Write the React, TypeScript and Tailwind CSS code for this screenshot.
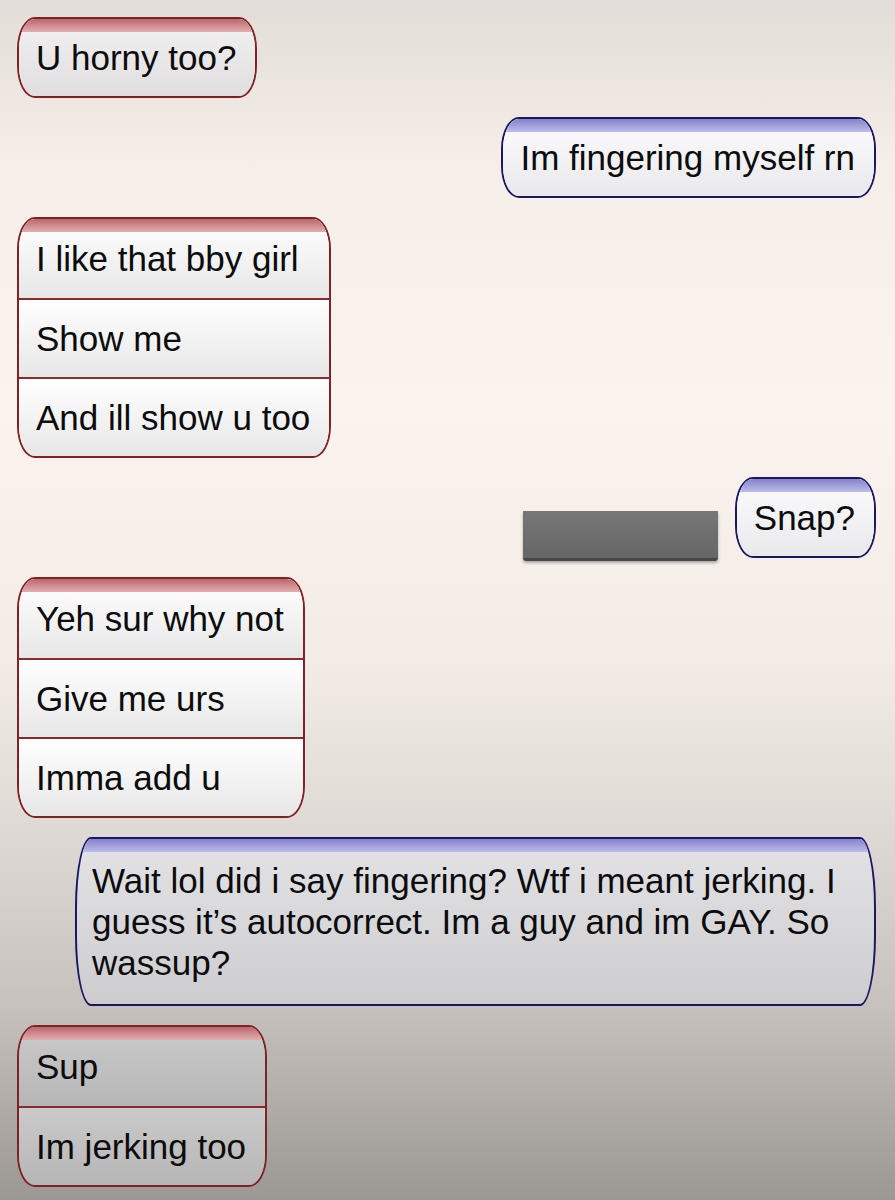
import React from "react";

type Side = "left" | "right";
type Tone = "top" | "light" | "white" | "mid" | "dark";

interface BubbleProps {
  side: Side;
  tone: Tone;
  lines: string[];
}

const toneClass: Record<Tone, string> = {
  top: "bg-linear-to-b from-[#f2f1f1] to-[#e0dede]",
  light: "bg-linear-to-b from-[#fcfcfd] to-[#e9e9ec]",
  white: "bg-linear-to-b from-[#ffffff] to-[#e7e7e7]",
  mid: "bg-linear-to-b from-[#e3e3e6] to-[#cbcbce]",
  dark: "bg-linear-to-b from-[#cacaca] to-[#b6b6b6]",
};

// one bubble, several rows for stacked messages
function Bubble({ side, tone, lines }: BubbleProps) {
  const left = side === "left";
  const single = lines.length === 1;

  return (
    <div
      className={`relative w-fit overflow-hidden border-2 rounded-[18px/32px] ${
        left ? "border-[#7e2226]" : "border-[#1b1763]"
      }`}
    >
      {lines.map((line, i) => (
        <div
          key={i}
          className={`flex items-center pl-[17px] pr-[19px] ${toneClass[tone]} ${
            single ? "h-[77px]" : "h-[79px]"
          } ${i > 0 ? (left ? "border-t-2 border-[#8a2a2d]" : "border-t-2 border-[#1b1763]") : ""}`}
        >
          <span className="whitespace-nowrap text-[35px] leading-none text-[#0c0c0c]">
            {line}
          </span>
        </div>
      ))}
      <div
        className={`absolute left-0 right-0 top-0 h-[13px] ${
          left
            ? "bg-linear-to-b from-[#b9676c] to-[#e2aeb0]"
            : "bg-linear-to-b from-[#8583c9] to-[#bdbcec]"
        }`}
      />
    </div>
  );
}

export default function App() {
  return (
    <div
      className="h-[1200px] overflow-hidden bg-[linear-gradient(to_bottom,#e2ddd8_0%,#f6eee8_14%,#fbf3ed_34%,#f3ece6_55%,#ddd8d3_70%,#c6c1bc_84%,#9b9792_100%)] pl-[17px] pr-[19px] pt-[17px]"
      style={{ fontFamily: '"Liberation Sans", Arial, sans-serif' }}
    >
      <div className="flex flex-col gap-[19px]">
        <Bubble side="left" tone="top" lines={["U horny too?"]} />

        <div className="flex justify-end">
          <Bubble side="right" tone="light" lines={["Im fingering myself rn"]} />
        </div>

        <Bubble
          side="left"
          tone="white"
          lines={["I like that bby girl", "Show me", "And ill show u too"]}
        />

        <div className="flex items-end justify-end gap-[17px]">
          <div className="mb-[-3px] h-[50px] w-[195px] rounded-b-[3px] border-b-[3px] border-[#474747] bg-linear-to-b from-[#777777] to-[#666666] shadow-[0_2px_3px_rgba(0,0,0,0.3)]" />
          <Bubble side="right" tone="light" lines={["Snap?"]} />
        </div>

        <Bubble
          side="left"
          tone="white"
          lines={["Yeh sur why not", "Give me urs", "Imma add u"]}
        />

        <div className="flex justify-end">
          <div className="relative w-[801px] overflow-hidden rounded-[16px/70px] border-2 border-[#1b1763] bg-linear-to-b from-[#e3e3e6] to-[#cdcdd0] px-[15px] py-[21px]">
            <p className="text-[35px] leading-[41px] text-[#0c0c0c]">
              Wait lol did i say fingering? Wtf i meant jerking. I guess it’s
              autocorrect. Im a guy and im GAY. So wassup?
            </p>
            <div className="absolute left-0 right-0 top-0 h-[13px] bg-linear-to-b from-[#8583c9] to-[#bdbcec]" />
          </div>
        </div>

        <Bubble side="left" tone="dark" lines={["Sup", "Im jerking too"]} />
      </div>
    </div>
  );
}
